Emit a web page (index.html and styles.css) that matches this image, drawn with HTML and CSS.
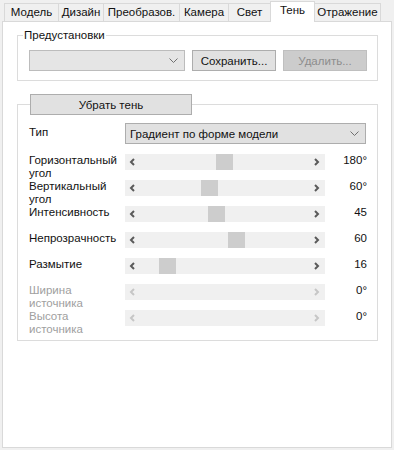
FILE: index.html
```html
<!DOCTYPE html>
<html lang="ru">
<head>
  <meta charset="UTF-8" />
  <title>Тень</title>
  <link rel="stylesheet" href="styles.css">
</head>
<body>
  <div class="tabs">
    <div class="tab w-model">Модель</div>
    <div class="tab w-design">Дизайн</div>
    <div class="tab w-trans">Преобразов.</div>
    <div class="tab w-cam">Камера</div>
    <div class="tab w-light">Свет</div>
    <div class="tab active w-shadow">Тень</div>
    <div class="tab w-refl">Отражение</div>
  </div>

  <div class="panel">
    <fieldset class="group presets">
      <legend class="caption">Предустановки</legend>
      <div class="preset-row">
        <div class="combo combo-empty">
          <span class="combo-text"></span>
          <svg class="chev" width="9" height="5" viewBox="0 0 9 5"><polyline points="0.5,0.5 4.5,4.5 8.5,0.5" /></svg>
        </div>
        <button class="btn">Сохранить...</button>
        <button class="btn" disabled>Удалить...</button>
      </div>
    </fieldset>

    <fieldset class="group shadow">
      <legend class="btn-legend"><button class="btn btn-wide">Убрать тень</button></legend>
      <div class="grid">
        <div class="lbl lbl-type">Тип</div>
        <div class="combo combo-type">
          <span class="combo-text">Градиент по форме модели</span>
          <svg class="chev" width="9" height="5" viewBox="0 0 9 5"><polyline points="0.5,0.5 4.5,4.5 8.5,0.5" /></svg>
        </div>

        <div class="lbl">Горизонтальный<br>угол</div>
        <div class="track">
          <svg class="arr" width="7" height="8" viewBox="0 0 7 8"><polyline points="5,1 2,4 5,7" /></svg>
          <span class="thumb" style="left: 91px"></span>
          <svg class="arr" width="7" height="8" viewBox="0 0 7 8"><polyline points="2,1 5,4 2,7" /></svg>
        </div>
        <div class="val">180°</div>

        <div class="lbl">Вертикальный<br>угол</div>
        <div class="track">
          <svg class="arr" width="7" height="8" viewBox="0 0 7 8"><polyline points="5,1 2,4 5,7" /></svg>
          <span class="thumb" style="left: 76px"></span>
          <svg class="arr" width="7" height="8" viewBox="0 0 7 8"><polyline points="2,1 5,4 2,7" /></svg>
        </div>
        <div class="val">60°</div>

        <div class="lbl">Интенсивность</div>
        <div class="track">
          <svg class="arr" width="7" height="8" viewBox="0 0 7 8"><polyline points="5,1 2,4 5,7" /></svg>
          <span class="thumb" style="left: 83px"></span>
          <svg class="arr" width="7" height="8" viewBox="0 0 7 8"><polyline points="2,1 5,4 2,7" /></svg>
        </div>
        <div class="val">45</div>

        <div class="lbl">Непрозрачность</div>
        <div class="track">
          <svg class="arr" width="7" height="8" viewBox="0 0 7 8"><polyline points="5,1 2,4 5,7" /></svg>
          <span class="thumb" style="left: 103px"></span>
          <svg class="arr" width="7" height="8" viewBox="0 0 7 8"><polyline points="2,1 5,4 2,7" /></svg>
        </div>
        <div class="val">60</div>

        <div class="lbl">Размытие</div>
        <div class="track">
          <svg class="arr" width="7" height="8" viewBox="0 0 7 8"><polyline points="5,1 2,4 5,7" /></svg>
          <span class="thumb" style="left: 34px"></span>
          <svg class="arr" width="7" height="8" viewBox="0 0 7 8"><polyline points="2,1 5,4 2,7" /></svg>
        </div>
        <div class="val">16</div>

        <div class="lbl off">Ширина<br>источника</div>
        <div class="track off">
          <svg class="arr" width="7" height="8" viewBox="0 0 7 8"><polyline points="5,1 2,4 5,7" /></svg>
          <svg class="arr" width="7" height="8" viewBox="0 0 7 8"><polyline points="2,1 5,4 2,7" /></svg>
        </div>
        <div class="val">0°</div>

        <div class="lbl off">Высота<br>источника</div>
        <div class="track off">
          <svg class="arr" width="7" height="8" viewBox="0 0 7 8"><polyline points="5,1 2,4 5,7" /></svg>
          <svg class="arr" width="7" height="8" viewBox="0 0 7 8"><polyline points="2,1 5,4 2,7" /></svg>
        </div>
        <div class="val">0°</div>
      </div>
    </fieldset>
  </div>
</body>
</html>
```

FILE: styles.css
```css
body { margin: 0; background: #f0f0f0; font-family: 'Liberation Sans', Arial, sans-serif; font-size: 11.5px; color: #111; }

.tabs { display: flex; align-items: flex-end; height: 21px; padding-left: 4px; }
.tab {
  height: 17px; line-height: 17px; text-align: center; background: #f0f0f0;
  border: 1px solid #d9d9d9; border-bottom: none; margin-right: -1px; box-sizing: content-box;
}
.tab.active { height: 20px; line-height: 17px; background: #fff; position: relative; z-index: 1; margin-bottom: -1px; }
.w-model { width: 53px; }
.w-design { width: 44px; }
.w-trans { width: 75px; }
.w-cam { width: 48px; }
.w-light { width: 41px; }
.w-shadow { width: 43px; }
.w-refl { width: 65px; }

.panel { margin: 0 2px; height: 427px; background: #fff; border: 1px solid #d9d9d9; padding-top: 6px; box-sizing: border-box; }

.group { border: 1px solid #dcdcdc; margin: 0 13px 0 14px; padding: 0 10px 0 11px; min-width: 0; }
.caption { padding: 0 1px; margin-left: -6px; line-height: 14px; }
.presets { padding-top: 8px; padding-bottom: 9px; }
.preset-row { display: flex; gap: 7px; align-items: center; }

.combo {
  height: 19px; border: 1px solid #adadad; background: #e1e1e1; display: flex; align-items: center;
  padding: 0 6px 0 4px; box-sizing: content-box;
}
.combo-empty { width: 144px; border-color: #bcbcbc; background: #e5e5e5; }
.combo-type { width: 229px; }
.combo-text { flex: 1; white-space: nowrap; }
.chev { fill: none; stroke: #707070; stroke-width: 1; }

.btn {
  height: 21px; width: 84px; padding: 0; border: 1px solid #adadad; background: #e1e1e1;
  font: inherit; color: #111; box-sizing: border-box;
}
.btn:disabled { background: #cccccc; border-color: #bfbfbf; color: #8d8d8d; }
.btn-wide { width: 162px; }

.shadow { margin-top: 13px; padding-top: 8px; padding-bottom: 4px; }
.btn-legend { padding: 0; margin-left: 1px; line-height: 0; }

.grid { display: grid; grid-template-columns: 96px 200px 1fr; grid-template-rows: 31px; grid-auto-rows: 26px; align-items: start; }
.grid .lbl-type { line-height: 21px; margin-top: -1px; }
.grid .combo-type { grid-column: 2 / 4; }
.lbl { line-height: 13px; white-space: nowrap; }
.lbl.off { color: #a0a0a0; }

.track {
  height: 16px; background: #f0f0f0; position: relative; display: flex; justify-content: space-between;
  align-items: center; padding: 0 5px 0 4px;
}
.arr { fill: none; stroke: #5a5a5a; stroke-width: 2; }
.track.off .arr { stroke: #c6c6c6; }
.thumb { position: absolute; top: 0; width: 17px; height: 16px; background: #cdcdcd; }
.val { text-align: right; line-height: 13px; }
```
